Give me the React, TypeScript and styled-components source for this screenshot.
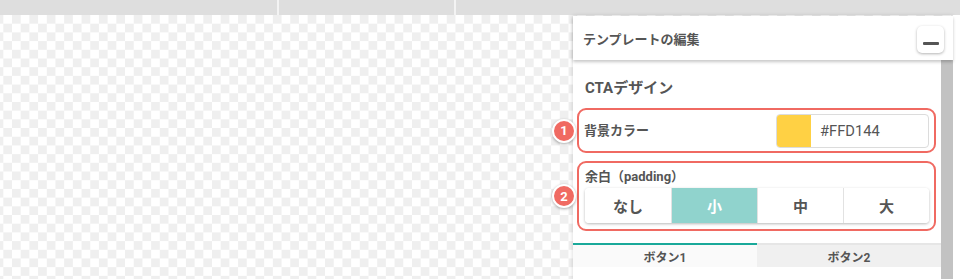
import styled, { createGlobalStyle } from 'styled-components';

const GlobalStyle = createGlobalStyle`
  html, body {
    margin: 0;
    padding: 0;
    background: #fff;
  }
  body {
    font-family: Roboto, "Noto Sans CJK JP", "Noto Sans", sans-serif;
    color: #555;
  }
  * {
    box-sizing: border-box;
  }
`;

const paddingOptions = ['なし', '小', '中', '大'];

const App = () => {
  return (
    <Page>
      <GlobalStyle />
      <TopBar>
        <TopSegment $width={277} />
        <TopSegment $width={175} />
        <TopSegment />
      </TopBar>
      <Workspace>
        <Canvas />
        <Panel>
          <PanelHeader>
            <PanelTitle>テンプレートの編集</PanelTitle>
            <MinimizeButton aria-label="minimize">
              <span />
            </MinimizeButton>
          </PanelHeader>
          <PanelBody>
            <Content>
              <SectionTitle>CTAデザイン</SectionTitle>
              <FieldBox $row>
                <Badge>1</Badge>
                <FieldLabel>背景カラー</FieldLabel>
                <ColorInput>
                  <Swatch $color="#FFD144" />
                  <ColorValue>#FFD144</ColorValue>
                </ColorInput>
              </FieldBox>
              <FieldBox>
                <Badge>2</Badge>
                <FieldLabel>余白（padding）</FieldLabel>
                <ButtonGroup>
                  {paddingOptions.map((opt) => (
                    <SegButton key={opt} $active={opt === '小'}>
                      {opt}
                    </SegButton>
                  ))}
                </ButtonGroup>
              </FieldBox>
              <Tabs>
                <Tab $active>ボタン1</Tab>
                <Tab>ボタン2</Tab>
              </Tabs>
            </Content>
            <Scrollbar />
          </PanelBody>
        </Panel>
        <Gutter />
      </Workspace>
    </Page>
  );
};

const Page = styled.div`
  width: 960px;
  height: 279px;
  overflow: hidden;
  display: flex;
  flex-direction: column;
`;

const TopBar = styled.div`
  height: 15px;
  flex-shrink: 0;
  display: flex;
  gap: 2px;
  background: #f3f3f3;
`;

const TopSegment = styled.div<{ $width?: number }>`
  background: #dedede;
  ${(p) => (p.$width ? `width: ${p.$width}px;` : 'flex: 1;')}
`;

const Workspace = styled.div`
  flex: 1;
  display: flex;
  min-height: 0;
  background: repeating-conic-gradient(#efefef 0 25%, #ffffff 0 50%) 3.3px 0 / 17.4px 17.4px;
`;

const Canvas = styled.div`
  width: 573px;
  flex-shrink: 0;
`;

const Panel = styled.div`
  width: 380px;
  margin-top: 1px;
  display: flex;
  flex-direction: column;
  box-shadow: 0 0 4px rgba(0, 0, 0, 0.18);
`;

const Gutter = styled.div`
  flex: 1;
  background: #fff;
`;

const PanelHeader = styled.div`
  height: 44px;
  flex-shrink: 0;
  display: flex;
  align-items: center;
  justify-content: space-between;
  padding: 0 9px 0 10px;
  background: #fff;
  box-shadow: 0 2px 3px rgba(0, 0, 0, 0.22);
  position: relative;
  z-index: 1;
`;

const PanelTitle = styled.h2`
  margin: 0;
  font-size: 13px;
  font-weight: 700;
  color: #555;
`;

const MinimizeButton = styled.button`
  width: 27px;
  height: 27px;
  margin-top: 2px;
  border: none;
  border-radius: 5px;
  background: #fff;
  box-shadow: 0 1px 3px rgba(0, 0, 0, 0.3);
  display: flex;
  align-items: flex-end;
  justify-content: center;
  padding: 0 0 8px;
  span {
    display: block;
    width: 16px;
    height: 3px;
    border-radius: 1px;
    background: #555;
  }
`;

const PanelBody = styled.div`
  flex: 1;
  display: flex;
  min-height: 0;
`;

const Content = styled.div`
  flex: 1;
  background: #fff;
  display: flex;
  flex-direction: column;
  gap: 8px;
  padding: 0 5px 0 4px;
`;

const Scrollbar = styled.div`
  width: 12px;
  background: #c2c2c2;
`;

const SectionTitle = styled.h3`
  margin: 0;
  padding: 18px 8px 2px;
  font-size: 15px;
  line-height: 20px;
  font-weight: 700;
  color: #555;
`;

const FieldBox = styled.div<{ $row?: boolean }>`
  position: relative;
  border: 2px solid #f06a62;
  border-radius: 9px;
  display: flex;
  ${(p) =>
    p.$row
      ? `
    align-items: center;
    justify-content: space-between;
    padding: 4px 5px 3px;
  `
      : `
    flex-direction: column;
    padding: 4px 5px 6px 6px;
  `}
`;

const Badge = styled.span`
  position: absolute;
  left: -27px;
  top: calc(50% - 12px);
  width: 24px;
  height: 24px;
  border-radius: 50%;
  border: 2px solid #fff;
  background: #f06a62;
  box-shadow: 0 1px 3px rgba(0, 0, 0, 0.35);
  color: #fff;
  font-size: 13px;
  font-weight: 700;
  display: flex;
  align-items: center;
  justify-content: center;
`;

const FieldLabel = styled.div`
  font-size: 13px;
  line-height: 20px;
  font-weight: 700;
  color: #555;
  margin-bottom: 1px;
`;

const ColorInput = styled.div`
  width: 153px;
  height: 34px;
  display: flex;
  align-items: center;
  border: 1px solid #dcdcdc;
  border-radius: 4px;
  overflow: hidden;
`;

const Swatch = styled.div<{ $color: string }>`
  width: 34px;
  align-self: stretch;
  background: ${(p) => p.$color};
`;

const ColorValue = styled.span`
  padding-left: 9px;
  font-size: 14.7px;
  color: #555;
`;

const ButtonGroup = styled.div`
  display: grid;
  grid-template-columns: repeat(4, 1fr);
  height: 35px;
  border-radius: 4px;
  box-shadow: 0 1px 3px rgba(0, 0, 0, 0.28);
  overflow: hidden;
`;

const SegButton = styled.div<{ $active?: boolean }>`
  display: flex;
  align-items: center;
  justify-content: center;
  font-size: 15px;
  font-weight: 700;
  color: ${(p) => (p.$active ? '#fff' : '#555')};
  background: ${(p) => (p.$active ? '#90d3cd' : '#fff')};
  & + & {
    border-left: 1px solid #e2e2e2;
  }
`;

const Tabs = styled.div`
  display: grid;
  grid-template-columns: 1fr 1fr;
  margin: 4px -5px 0 -4px;
`;

const Tab = styled.div<{ $active?: boolean }>`
  height: 24px;
  display: flex;
  align-items: center;
  justify-content: center;
  font-size: 12px;
  font-weight: 700;
  color: #555;
  background: ${(p) => (p.$active ? '#fafafa' : '#f0f0f0')};
  border-top: 2px solid ${(p) => (p.$active ? '#1aa99a' : '#e6e6e6')};
`;

export default App;
